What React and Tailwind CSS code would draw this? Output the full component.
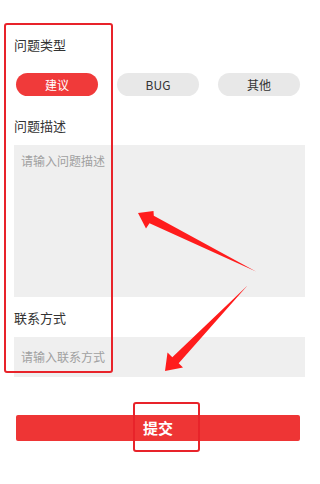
import React from "react";

export default function App() {
  return (
    <div
      className="relative w-[305px] h-[484px] bg-white overflow-hidden"
      style={{ fontFamily: '"Noto Sans CJK SC", "Noto Sans", sans-serif' }}
    >
      <div className="flex flex-col pt-[36px]">
        <div className="pl-[14px] text-[13px] leading-[18px] text-[#333]">问题类型</div>
        <div className="grid grid-cols-3 gap-[19px] pl-[16px] pr-[5px] mt-[19px]">
          <div className="h-[23px] rounded-full bg-[#f03a3a] text-white text-[12px] flex items-center justify-center">
            建议
          </div>
          <div className="h-[23px] rounded-full bg-[#e8e8e8] text-[#333] text-[12px] flex items-center justify-center">
            BUG
          </div>
          <div className="h-[23px] rounded-full bg-[#e8e8e8] text-[#333] text-[12px] flex items-center justify-center">
            其他
          </div>
        </div>
        <div className="pl-[14px] mt-[21px] text-[13px] leading-[18px] text-[#333]">问题描述</div>
        <div className="ml-[14px] mt-[10px] h-[152px] bg-[#efefef] px-[7px] pt-[8px] text-[12px] leading-[16px] text-[#a0a0a0]">
          请输入问题描述
        </div>
        <div className="pl-[14px] mt-[12px] text-[13px] leading-[18px] text-[#333]">联系方式</div>
        <div className="ml-[14px] mt-[10px] h-[40px] bg-[#efefef] px-[7px] flex items-center text-[12px] text-[#a0a0a0]">
          请输入联系方式
        </div>
        <div className="mx-[5px] ml-[16px] mt-[38px] h-[26px] rounded-[2px] bg-[#ee3535] flex items-center justify-center text-white text-[15px] font-bold">
          提交
        </div>
      </div>

      {/* annotations */}
      <div className="absolute left-[4px] top-[23px] w-[109px] h-[350px] border-[2.5px] border-[#e8232a] rounded-[3px]" />
      <div className="absolute left-[133px] top-[402px] w-[67px] h-[50px] border-[2.5px] border-[#e8232a] rounded-[3px]" />
      <svg className="absolute left-0 top-0" width="305" height="484" viewBox="0 0 305 484">
        <polygon
          points="138,213 153.5,211 153.8,215.8 256,271.5 149.5,223.2 146,228.5"
          fill="#ff1c1c"
        />
        <polygon
          points="165,371 167.5,352.5 172.3,357.3 247.5,285.5 178.7,363.2 183,367.5"
          fill="#ff1c1c"
        />
      </svg>
    </div>
  );
}
